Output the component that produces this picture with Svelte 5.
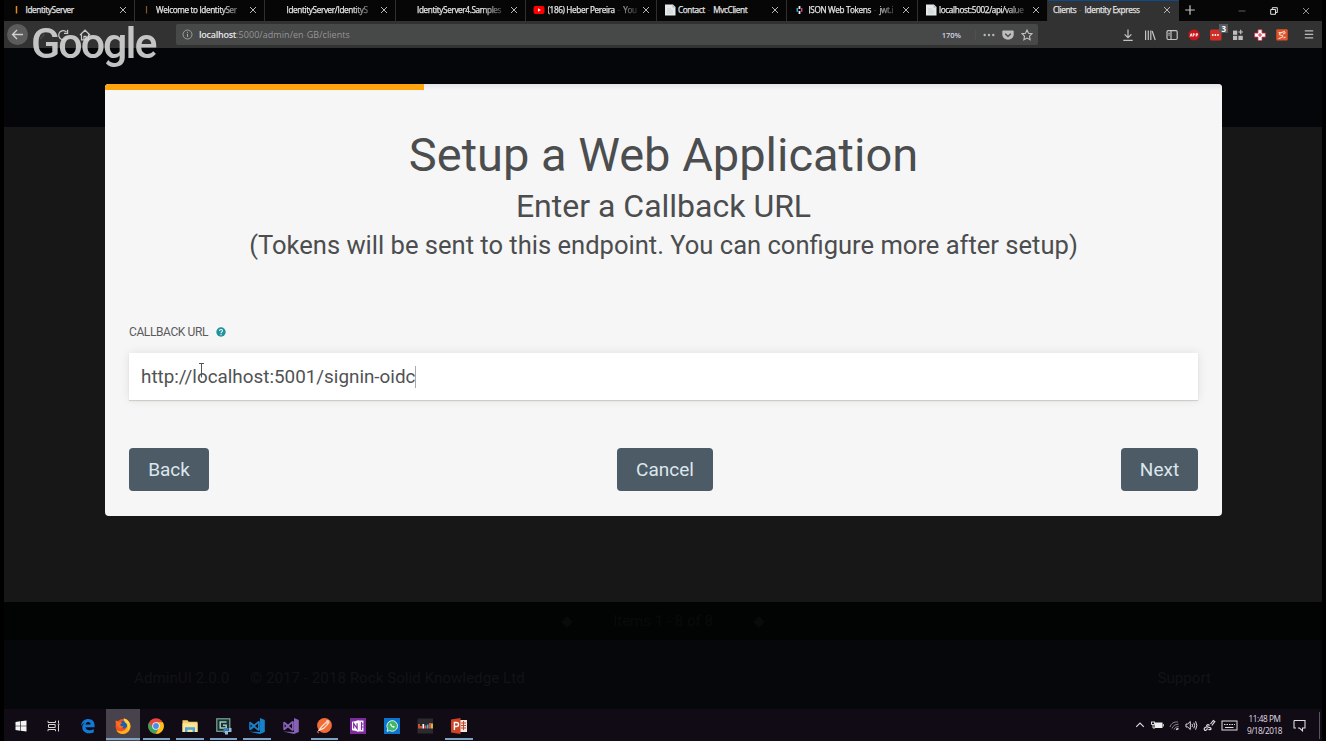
<script>
  const tabs = [
    { icon: 'bar', a: 'IdentityServer' },
    { icon: 'dimbar', a: 'Welcome to IdentitySer', fade: true },
    { icon: '', a: 'IdentityServer/IdentityS', fade: true },
    { icon: '', a: 'IdentityServer4.Samples', fade: true },
    { icon: 'yt', a: '(186) Heber Pereira', b: 'You', fade: true },
    { icon: 'page', a: 'Contact', b: 'MvcClient' },
    { icon: 'jwt', a: 'JSON Web Tokens', b: 'jwt.i', fade: true },
    { icon: 'page', a: 'localhost:5002/api/value', fade: true },
    { icon: 'none', a: 'Clients', b: 'Identity Express', active: true }
  ];
  const tools = ['download', 'library', 'sidebar', 'abp', 'dots', 'grid', 'plus', 'orange'];
  const tasks = [
    { n: 'firefox', on: true, active: true },
    { n: 'chrome', on: true },
    { n: 'folder', on: true },
    { n: 'editor', on: true },
    { n: 'vscode', on: true },
    { n: 'vs' },
    { n: 'postman', on: true },
    { n: 'onenote' },
    { n: 'whatsapp' },
    { n: 'chart' },
    { n: 'ppt', on: true }
  ];
</script>

{#snippet cross()}
  <svg class="cross" width="8" height="8" viewBox="0 0 8 8"><path d="M1 1l6 6M7 1L1 7" stroke="#b5b5b5" stroke-width="1" fill="none" /></svg>
{/snippet}

{#snippet tool(n)}
  <svg width="14" height="14" viewBox="0 0 14 14" fill="none" stroke="#c4c4c4" stroke-width="1.2">
    {#if n === 'download'}
      <path d="M7 1.5v8M3.600 6.300L7 9.700l3.400-3.400M2.300 12.300h9.400" />
    {:else if n === 'library'}
      <path d="M2.600 2.500v9.500M5.300 2.500v9.500M7.800 2.500v9.500M9.200 3l3 9" />
    {:else if n === 'sidebar'}
      <rect x="2" y="2.700" width="10.200" height="8.800" rx="1.200" /><path d="M6 3v8M3.400 5.300h1.300M3.400 7.200h1.300" />
    {:else if n === 'abp'}
      <path d="M4.700 1.700h4.600l3.100 3v4.500l-3.100 3.100H4.700L1.600 9.200V4.700z" fill="#c9141c" stroke="none" />
      <path d="M3.200 8.600l1-3 .8 3M6.200 8.600V5.700h1v1.500h-1M9.200 8.600V5.700h1.200v1.500H9.200" stroke="#fff" stroke-width=".9" />
    {:else if n === 'dots'}
      <rect x="1" y="1.500" width="11.500" height="11" rx="1.600" fill="#d32d27" stroke="none" />
      <g fill="#fff" stroke="none"><circle cx="3.800" cy="7" r=".9" /><circle cx="6.400" cy="7" r=".9" /><circle cx="9" cy="7" r=".9" /></g>
    {:else if n === 'grid'}
      <g fill="#bdbdbd" stroke="none"><rect x="2" y="2.600" width="4.200" height="4.200" /><rect x="2" y="7.800" width="4.200" height="4.200" /><rect x="7.400" y="7.800" width="4.400" height="4.200" /></g>
      <path d="M9.700 1.700v4.600M7.400 4h4.600" />
    {:else if n === 'plus'}
      <path d="M5 1.700h4v3.400h3.400v4H9v3.400H5V9.100H1.600v-4H5z" fill="#fff" stroke="#d5394f" stroke-width=".8" /><path d="M7 5v4M5 7h4" stroke="#d33448" stroke-width="1.100" />
    {:else}
      <rect x="1.300" y="1.200" width="11.400" height="11.400" rx="1" fill="#e2532c" stroke="none" />
      <path d="M9.800 3.200L5.500 5c-2 .9-1 2.200.8 2.200S8.400 8.600 6.500 9.400L3.500 10.700M3.500 4.500h3M8 6l2.500-1.500M8.500 10l2-1" stroke="#fbd9c8" stroke-width="1.100" />
    {/if}
  </svg>
{/snippet}

{#snippet task(n)}
  <svg width="18" height="18" viewBox="0 0 18 18">
    {#if n === 'firefox'}
      <circle cx="9" cy="9.500" r="7.500" fill="#f4511e" />
      <path d="M9.500 1.500c4 .5 7 3.500 7 7.800C16.500 13.500 13 17 9 17c-3 0-5.500-1.500-6.700-4 3 2 8.500 1.700 9.700-1.500 1-2.600.2-4.500-1.500-6z" fill="#ffb01f" />
      <circle cx="9.500" cy="7.800" r="3.800" fill="#1e5fb0" />
      <path d="M1.700 3.500c1.300.3 2 .9 2.700 1.500 1.600-.3 3 .2 3.900 1.300-1.300.1-2.100.7-2 1.700.2 1.200 1.700 1.500 3.300 1.300-.8 2-3.500 2.500-5.200 1-2.400-2-3-4.300-2.700-6.800z" fill="#ff6b1a" />
      <path d="M10 1.500c3.500 1 5.700 3.700 5.700 7.200 0 1.900-.8 3.500-2 4.500 1-4-.5-6.700-3-8.300z" fill="#ffd43c" />
    {:else if n === 'chrome'}
      <circle cx="9" cy="9" r="7.800" fill="#e8453c" />
      <path d="M2.200 5.200A7.800 7.800 0 0 0 8.500 16.800L12 10.500 9 9 5.700 10.800z" fill="#3aa757" />
      <path d="M9 5.300h6.900A7.800 7.800 0 0 1 8.600 16.800L12.300 10.800z" fill="#fbc116" />
      <circle cx="9" cy="9" r="3.800" fill="#eef3f8" /><circle cx="9" cy="9" r="2.900" fill="#4a8af4" />
    {:else if n === 'folder'}
      <path d="M1.500 3.200h5l1.200 1.500h8.800V15h-15z" fill="#f5cf69" /><path d="M1.500 6.300h15V15h-15z" fill="#fde598" />
      <path d="M4 15v-4.800h10V15h-2.400v-2.300H6.400V15z" fill="#49a7d9" />
    {:else if n === 'editor'}
      <rect x="1.800" y="1.800" width="13" height="12.500" fill="#12332f" stroke="#7fa59c" stroke-width="1.200" />
      <path d="M11.500 5H5.200v6h6V8.200H8" fill="none" stroke="#a7c7be" stroke-width="1.500" />
      <path d="M9.500 11h4v2.500h-3V16h-2v-4z" fill="#3e80bd" /><path d="M14 11h2.500v4H13v2.500h-3V14h4z" fill="#9dbbd5" />
    {:else if n === 'vscode' || n === 'vs'}
      <g fill={n === 'vscode' ? '#1781ca' : '#8661b5'}>
        <path d="M12 1l4.800 2v12L12 17l-11-2.400 11 .5z" />
        <path d="M1.200 5.300l1.300-.6L6 7.500l4.300-3.600 1.500.6v8.800l-1.500.6L6 10.400l-3.500 2.800-1.300-.6zm1.400 2v3.200L4.300 9zm7.400-.8L7 9l3 2.400z" fill-rule="evenodd" />
      </g>
    {:else if n === 'postman'}
      <circle cx="9.500" cy="8.500" r="7.400" fill="#f16b35" />
      <path d="M12.500 4.200L7 9.200l-3 4.200 4.500-2 5-5" fill="none" stroke="#ffe1d0" stroke-width="1.200" /><circle cx="12.700" cy="4.900" r="1.900" fill="#fbd0b9" /><path d="M2 14.500l2 1.500" stroke="#d34f27" stroke-width="1.500" />
    {:else if n === 'onenote'}
      <rect x="1" y="1" width="16" height="16" fill="#7d2aa0" /><path d="M7.500 3.500h7v11h-7z" fill="#f4e9f8" /><path d="M12.500 5v8M12.500 7h2M12.500 10h2" stroke="#7d2aa0" />
      <path d="M3 4.700l7-1.200v11L3 13.300z" fill="#fff" /><path d="M4.700 11.500V6.500l3.400 5V6.300" stroke="#7d2aa0" stroke-width="1.200" fill="none" />
    {:else if n === 'whatsapp'}
      <rect x="1" y="1" width="16" height="16" fill="#0b74d1" /><path d="M4 14.300l.7-2.600a5.300 5.300 0 1 1 2 1.900z" fill="#3fb767" stroke="#d7f0e2" stroke-width="1" />
      <path d="M7.300 6.500c-.8 1.700 1.800 4.500 3.900 4.200l.6-1.200-1.500-.8-.7.600-1.300-1.300.5-.7z" fill="#fff" />
    {:else if n === 'chart'}
      <rect x="1.500" y="1.500" width="15.500" height="15" fill="#2b2b2d" />
      <g stroke-width="1.700" fill="none"><path d="M3 7v4.500M5 9v2.500" stroke="#ec5440" /><path d="M7.300 7v4.500" stroke="#fff" /><path d="M9.500 8.500v3M14 6v5.500" stroke="#f0603e" /><path d="M11.700 7.500v4" stroke="#52aae6" /><path d="M16 6.500v5" stroke="#f0d04a" /></g>
    {:else}
      <rect x="8" y="3" width="9" height="12" fill="#f2e5df" /><path d="M11 6h5M11 8.500h5M11 11h5M13.500 4v9" stroke="#c5482b" />
      <path d="M1 2.500L10.500 1v16L1 15.500z" fill="#cf4424" /><path d="M4.400 13V5.500h2.200c2.600 0 2.600 4 0 4H4.400" stroke="#fff" stroke-width="1.400" fill="none" />
    {/if}
  </svg>
{/snippet}

<div class="screen">
  <div class="tabs">
    {#each tabs as t}
      <div class="tab" class:active={t.active}>
        {#if t.icon !== 'none'}
          <svg class="fav" width="12" height="12" viewBox="0 0 12 12">
            {#if t.icon === 'bar'}<path d="M5.500 2v7.500" stroke="#e68a1d" stroke-width="1.500" />
            {:else if t.icon === 'dimbar'}<path d="M4.500 2v7.500" stroke="#7e5a31" stroke-width="1.200" />
            {:else if t.icon === 'yt'}<rect x=".5" y="2" width="11" height="8" rx="2" fill="#f00" /><path d="M5 4.300v3.400L7.800 6z" fill="#fff" />
            {:else if t.icon === 'page'}<path d="M1 .5h8l2.500 2.500v8.500H1z" fill="#e6e9e9" /><path d="M8.500.5v3h3" fill="#b4b9bb" /><path d="M3 5h4M3 7h6M3 9h6" stroke="#bcc9cb" stroke-width=".7" />
            {:else if t.icon === 'jwt'}<path d="M5.500 2v3M5.500 7v3" stroke="#eee" stroke-width="1.800" /><path d="M3.300 4v3.800" stroke="#3cb1d8" stroke-width="1.500" /><path d="M7.700 4v3.800" stroke="#d63b86" stroke-width="1.500" />{/if}
          </svg>
        {/if}
        <span class="title" class:fade={t.fade}>{t.a}{#if t.b}<i>{' - '}</i>{t.b}{/if}</span>
        {@render cross()}
      </div>
    {/each}
    <svg class="new" width="12" height="12" viewBox="0 0 12 12"><path d="M6 1.200v9.600M1.200 6h9.600" stroke="#c6c6c6" stroke-width="1.200" /></svg>
    <div class="win">
      <svg width="8" height="8" viewBox="0 0 8 8"><path d="M.5 4h7" stroke="#5d5d5d" /></svg>
      <svg width="8" height="8" viewBox="0 0 8 8" fill="none" stroke="#e0e0e0"><path d="M.7 2.500h4.800v4.800H.7zM2.300 2.300V.7h5v4.800H5.700" /></svg>
      <svg width="8" height="8" viewBox="0 0 8 8"><path d="M1 1l6 6M7 1L1 7" stroke="#a0a0a0" stroke-width=".9" /></svg>
    </div>
  </div>

  <div class="toolbar">
    <div class="nav">
      <span class="backbtn"><svg width="13" height="13" viewBox="0 0 13 13"><path d="M12 6.500H1.500M6 2L1.500 6.500 6 11" fill="none" stroke="#cfcfcf" stroke-width="1.400" /></svg></span>
      <svg class="fwd" width="10" height="12" viewBox="0 0 10 12"><path d="M3 2l4 4-4 4" fill="none" stroke="#4a4a4a" stroke-width="1.200" /></svg>
      <svg class="reload" width="12" height="12" viewBox="0 0 12 12"><path d="M10.300 8A4.500 4.500 0 1 1 9.500 3M10.600.8v3.500H7" fill="none" stroke="#c8c8c8" stroke-width="1.200" /></svg>
      <svg class="home" width="12" height="12" viewBox="0 0 12 12"><path d="M1 6l5-4.800L11 6M2.500 5.500v5.300h7V5.500M5 10.500V7.300h2v3.200" fill="none" stroke="#c8c8c8" stroke-width="1.200" /></svg>
    </div>
    <div class="url">
      <svg width="11" height="11" viewBox="0 0 11 11"><circle cx="5.500" cy="5.500" r="4.500" fill="none" stroke="#a6a6a6" stroke-width=".9" /><path d="M5.500 4.800V8M5.500 2.800v1" stroke="#a6a6a6" /></svg>
      <span class="addr"><b>localhost</b>:5000/admin/en<i>-</i>GB/clients</span>
      <span class="zoom">170%</span>
      <svg class="more" width="12" height="4" viewBox="0 0 12 4" fill="#b6b6b6"><circle cx="1.700" cy="2" r="1.200" /><circle cx="6" cy="2" r="1.200" /><circle cx="10.300" cy="2" r="1.200" /></svg>
      <svg class="pocket" width="12" height="12" viewBox="0 0 12 12"><path d="M1.300 1.500h9.400q1 0 1 1v3c0 3-2.600 5.200-5.700 5.200S.3 8.500.3 5.500v-3q0-1 1-1z" fill="#bdbdbd" /><path d="M3.200 4.800L6 7.400l2.800-2.600" stroke="#474747" stroke-width="1.400" fill="none" /></svg>
      <svg class="star" width="12" height="12" viewBox="0 0 12 12"><path d="M6 1l1.500 3.200 3.500.5-2.500 2.500.6 3.600L6 9.100l-3.100 1.700.6-3.600L1 4.700l3.500-.5z" fill="none" stroke="#c4c4c4" stroke-width="1.100" /></svg>
    </div>
    <div class="tools">
      {#each tools as n}<span class="tool">{@render tool(n)}{#if n === 'dots'}<em>3</em>{/if}</span>{/each}
    </div>
    <svg class="burger" width="10" height="11" viewBox="0 0 10 11"><path d="M.8 1.800h8.400M.8 5.300h8.400M.8 8.800h8.400" stroke="#bcbcbc" stroke-width="1.300" /></svg>
  </div>

  <main>
    <div class="band header"></div>
    <div class="band body"></div>
    <div class="band pager"><span>◆</span><span>Items 1 - 8 of 8</span><span>◆</span></div>
    <footer><span class="ver">AdminUI 2.0.0</span><span class="copy">© 2017 - 2018 Rock Solid Knowledge Ltd</span><span class="support">Support</span></footer>

    <div class="overlay">
      <section class="card">
        <div class="progress"><div style="width: 28.6%"></div></div>
        <h1>Setup a Web Application</h1>
        <h2>Enter a Callback URL</h2>
        <h3>(Tokens will be sent to this endpoint. You can configure more after setup)</h3>
        <div class="label">CALLBACK URL
          <svg width="10" height="10" viewBox="0 0 10 10"><circle cx="5" cy="5" r="4.700" fill="#22929d" /><path d="M3.500 4c0-2 3-2 3-.2C6.500 5 5 4.900 5 6.200M5 7v1.200" fill="none" stroke="#e9f7f7" stroke-width="1.100" /></svg>
        </div>
        <div class="input"><span>http://localhost:5001/signin-oidc</span><i class="caret"></i>
          <svg class="ibeam" width="7" height="18" viewBox="0 0 7 18"><path d="M1 1.500h5M3.500 1.500v14" stroke="#555" fill="none" /></svg>
        </div>
        <div class="buttons"><button>Back</button><button class="cancel">Cancel</button><button class="next">Next</button></div>
      </section>
    </div>
  </main>

  <div class="taskbar">
    <svg class="start" width="12" height="12" viewBox="0 0 12 12" fill="#f4f4f4"><path d="M.5 2l4.600-.7v4.400H.5zM5.700 1.200L11.500.4v5.300H5.700zM.5 6.300h4.600v4.400L.5 10zM5.700 6.300h5.800v5.300l-5.800-.8z" /></svg>
    <svg class="view" width="13" height="12" viewBox="0 0 13 12" fill="none" stroke="#d5d5d5"><path d="M1 .8v1.700h7.500V.8M1 11.200V9.500h7.500v1.700M1.500 4.500h6.700v3H1.500zM11.500.5v3M11.500 5v6.500M10.800 4.300h1.700" /></svg>
    <svg class="edge" width="16" height="16" viewBox="0 0 16 16"><path d="M1 8C1.500 3.500 4.500 1 8.300 1c4.200 0 6.300 3 6.300 6.300v1.900H5.500c.2 2 1.800 3 4 3 1.600 0 3-.4 4.300-1.200v3.200C12.500 15 10.800 15.300 9 15.300c-4.200 0-6.700-2.500-6.700-6 0-2 1-3.700 2.800-4.800C3.300 5 1.900 6.300 1 8zm4.600-1.500h5c0-1.500-.8-2.500-2.400-2.500-1.500 0-2.400 1-2.600 2.500z" fill="#1279d4" fill-rule="evenodd" /></svg>
    <div class="tasks">
      {#each tasks as t}<div class="task" class:on={t.on} class:active={t.active}>{@render task(t.n)}</div>{/each}
    </div>
    <div class="tray">
      <svg width="10" height="10" viewBox="0 0 10 10"><path d="M1.200 6.800L5 3l3.800 3.800" stroke="#ddd" fill="none" stroke-width="1.100" /></svg>
      <svg width="14" height="10" viewBox="0 0 14 10"><path d="M4.500 2.500h8v5.500h-8z" fill="#eee" /><path d="M1 2h4M1.500 2v2.500h3V2M3 4.500V8h2M13.300 4v2.500" fill="none" stroke="#ddd" /></svg>
      <svg width="11" height="11" viewBox="0 0 11 11" fill="none" stroke="#8c8890"><path d="M1 7c1-3.500 4-5.500 8-5M3 8.500C3.800 6 6 4.300 9.500 4.200M5 9.500C5.500 7.800 7 6.700 9.500 6.600" /><path d="M7 9.500l2.500-1" stroke="#ddd" stroke-width="1.500" /></svg>
      <svg width="13" height="11" viewBox="0 0 13 11" fill="none" stroke="#ddd"><path d="M1 4h1.700L5.300 1.500v8L2.700 7H1zM7 4q1 1.500 0 3M8.800 2.700q1.800 2.800 0 5.600M10.600 1.300q2.500 4.200 0 8.400" /></svg>
      <svg width="13" height="13" viewBox="0 0 13 13" fill="none" stroke="#ddd" stroke-width="1.200"><path d="M7.500 5L10.300 1.500l1.500 1.200L8.800 6.500M6.500 6.500c-1.500-1.500-3.500-.5-2.500 1 .8 1.200 3.500.5 4 2 .2 1.200-1.500 1.500-2.500.7M4 8c-2 0-3.500 1.500-2.500 3 1.200 1 2.800-.3 2.800-1.800" /></svg>
      <svg width="17" height="11" viewBox="0 0 17 11" fill="none" stroke="#ddd"><rect x="1" y="1" width="15" height="9" /><path d="M3 4.500h11" stroke-dasharray="1.500 1" /><path d="M4 7.500h8.500" /></svg>
      <div class="clock"><span>11:48 PM</span><span>9/18/2018</span></div>
      <svg width="13" height="13" viewBox="0 0 13 13" fill="none" stroke="#ddd" stroke-width="1.100"><path d="M1 1.500h11V9H9.500v2.800L6.500 9H5M1 1.500V9h2" /></svg>
      <i class="peek"></i>
    </div>
  </div>
  <div class="watermark">Google</div>
</div>

<style>
  :global(body) { background: #000; overflow: hidden; }
  .screen { position: relative; width: 1326px; height: 741px; box-sizing: border-box; padding: 0 4px; background: #000; display: flex; flex-direction: column; overflow: hidden; font-family: "Open Sans", "Noto Sans", sans-serif; }
  svg { display: block; flex: none; }
  i { font-style: normal; }
  .tabs { display: flex; height: 21px; flex: none; background: #060606; align-items: center; }
  .tab { width: 130.500px; height: 21px; box-sizing: border-box; border-right: 1px solid #303030; display: flex; align-items: center; padding: 0 8px 1px 7px; color: #e4e4e4; font-size: 8.200px; letter-spacing: -.36px; flex: none; }
  .tab.active { background: #323232; box-shadow: inset 0 1px #0c4a8c; border-right: none; padding: 0 9px 1px 5px; }
  .fav { margin-right: 2.500px; }
  .cross { margin-right: -1px; }
  .title { flex: 1; white-space: nowrap; line-height: 14px; margin-right: 5px; -webkit-text-stroke: .25px; }
  .title i { color: rgba(228, 228, 228, .25); white-space: pre; letter-spacing: .5px; -webkit-text-stroke: 0; }
  .fade { -webkit-mask-image: linear-gradient(90deg, #000 74%, rgba(0, 0, 0, .15)); mask-image: linear-gradient(90deg, #000 74%, rgba(0, 0, 0, .15)); }
  .new { margin-left: 5px; margin-top: -2px; }
  .win { margin-left: auto; display: flex; gap: 24px; padding-right: 12px; }

  .toolbar { height: 27px; flex: none; background: #323232; display: flex; align-items: center; }
  .nav { width: 172px; display: flex; align-items: center; }
  .backbtn { width: 21px; height: 21px; margin-left: 3px; border-radius: 50%; background: #5c5c5c; display: grid; place-items: center; }
  .fwd { margin-left: 9px; }
  .reload { margin-left: 10px; }
  .home { margin-left: 10px; }
  .url { width: 862px; height: 21px; box-sizing: border-box; background: #474848; border-radius: 2px; display: flex; align-items: center; padding: 0 5px 0 6px; }
  .addr { margin-left: 6px; flex: 1; font-size: 9px; color: #969696; letter-spacing: .06px; line-height: 14px; }
  .addr b { color: #e8e8e8; font-weight: 600; letter-spacing: -.25px; }
  .addr i { color: rgba(150, 150, 150, .25); }
  .zoom { font-size: 7.500px; font-weight: 600; color: #d4d4e4; padding-right: 14px; border-right: 1px solid #505050; letter-spacing: -.05px; }
  .more { margin-left: 7px; }
  .pocket { margin-left: 7px; }
  .star { margin-left: 7px; }
  .tools { display: flex; margin-left: 79px; }
  .tool { position: relative; width: 22px; display: grid; place-items: center; }
  .tool em { position: absolute; right: -1px; top: -4px; background: #565b60; color: #fff; font: bold 8px/9px "Open Sans", sans-serif; padding: 0 2px; }
  .burger { margin-left: 11px; }

  main { position: relative; flex: 1; display: flex; flex-direction: column; font-family: Roboto, sans-serif; }
  .header { height: 79px; background: #050609; }
  .body { height: 475px; background: #171717; }
  .pager { height: 38px; background: #020303; color: #090b0a; font-size: 15px; display: flex; align-items: center; justify-content: center; gap: 40px; }
  footer { flex: 1; background: #06070a; color: #121315; display: flex; align-items: center; padding: 6px 111px 0 130px; font-size: 15.200px; }
  .copy { margin-left: 21px; }
  .support { margin-left: auto; }
  .overlay { position: absolute; inset: 0; display: flex; align-items: flex-start; padding: 36px 0 0 101px; }
  .card { width: 1117px; height: 431.500px; box-sizing: border-box; padding: 0 24px; background: #f6f6f6; border-radius: 4px; overflow: hidden; color: #4b4d4e; display: flex; flex-direction: column; }
  .progress { height: 6px; margin: 0 -24px; background: linear-gradient(#e4e4ea, #f6f6f6); flex: none; }
  .progress div { height: 6px; background: #ffa30f; }
  h1, h2, h3 { margin: 0; font-weight: 400; text-align: center; white-space: nowrap; }
  h1 { margin-top: 37px; font-size: 47px; line-height: 56px; }
  h2 { margin-top: 4px; font-size: 32px; line-height: 38px; }
  h3 { margin-top: 5px; font-size: 25.560px; line-height: 30px; }
  .label { margin-top: 64px; height: 16px; display: flex; align-items: center; gap: 8px; font-size: 12px; letter-spacing: -.4px; color: #5a5b5c; }
  .input { position: relative; margin-top: 13px; height: 47px; background: #fff; box-shadow: 0 0 10px rgba(0, 0, 0, .09), 0 1px 1px rgba(70, 70, 40, .18); display: flex; align-items: center; padding-left: 12px; font-size: 18.850px; color: #505254; }
  .caret { width: 1px; height: 22px; background: #aaa; }
  .ibeam { position: absolute; left: 69px; top: 9px; }
  .buttons { display: flex; justify-content: space-between; margin-top: 47.500px; }
  button { width: 80px; height: 43px; border: 0; border-radius: 4px; background: #4c5b66; color: #dce6ec; font: 400 19px Roboto, sans-serif; padding: 1px 0 0; }
  .cancel { width: 96px; }
  .next { width: 77px; }

  .taskbar { height: 32px; flex: none; background: #110b16; display: flex; align-items: center; }
  .start { margin-left: 11px; }
  .view { margin-left: 20px; }
  .edge { margin-left: 20px; }
  .start, .view, .edge { margin-top: 1px; }
  .tasks { display: flex; margin-left: 10px; height: 32px; }
  .task { width: 33.600px; height: 32px; box-sizing: border-box; padding-top: 1px; display: flex; align-items: center; justify-content: center; position: relative; }
  .task.on::after { content: ""; position: absolute; bottom: 1px; left: 3px; right: 3px; height: 2px; background: #7fa3c4; }
  .task.active { background: #48424c; }
  .task.active::after { left: 0; right: 0; }
  .tray { margin-left: auto; display: flex; align-items: center; gap: 5px; padding-right: 2px; }
  .clock { width: 43px; margin-right: 2px; display: flex; flex-direction: column; align-items: center; font-size: 8.200px; line-height: 12px; color: #e0dde2; letter-spacing: -.4px; white-space: nowrap; }
  .peek { width: 1px; height: 27px; background: #5a565e; margin-left: 8px; }
  .watermark { position: absolute; left: 31px; top: 18px; font: 500 43px/50px Roboto, sans-serif; letter-spacing: -2px; color: #d2d2d2; opacity: .92; }
</style>
